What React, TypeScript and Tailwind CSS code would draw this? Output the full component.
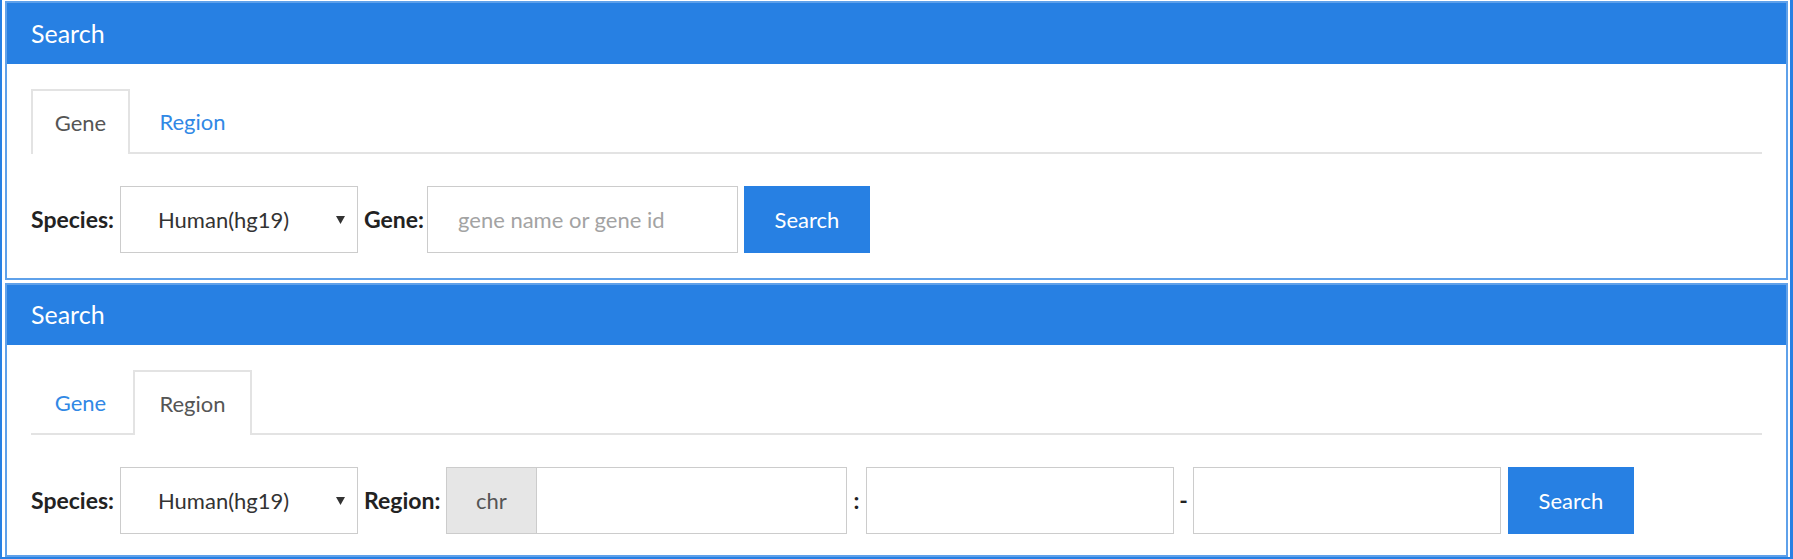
import React from "react";

const BLUE = "bg-[#2780e3]";

function Tabs({ active }: { active: "gene" | "region" }) {
  const tabs = [
    { key: "gene", label: "Gene", width: "w-[99px]" },
    { key: "region", label: "Region", width: "w-[119px]" },
  ];
  return (
    <div className="flex h-[65px] border-b-2 border-[#e3e3e3]">
      {tabs.map((t) => {
        const isActive = t.key === active;
        return (
          <div
            key={t.key}
            className={`${t.width} mr-[3px] -mb-[2px] h-[65px] flex items-center justify-center text-[22px] ${
              isActive
                ? "bg-white border-2 border-b-0 border-[#e3e3e3] text-[#555555]"
                : "text-[#3188e5]"
            }`}
          >
            {t.label}
          </div>
        );
      })}
    </div>
  );
}

function SpeciesSelect() {
  return (
    <>
      <div className="w-[89px] font-bold text-[23px] text-[#222222]">Species:</div>
      <div className="w-[238px] h-[67px] border border-[#cccccc] bg-white flex items-center">
        <span className="flex-1 pl-[37px] text-[22px] text-[#333333]">Human(hg19)</span>
        <svg width="9" height="8" viewBox="0 0 9 8" className="mr-[12px]">
          <path d="M0 0 L9 0 L4.5 8 Z" fill="#333333" />
        </svg>
      </div>
    </>
  );
}

function Panel({
  headerH,
  bottomPad,
  children,
}: {
  headerH: string;
  bottomPad: string;
  children: React.ReactNode;
}) {
  return (
    <section className="border-2 border-[#5fa1ea] bg-white">
      <div className={`${BLUE} ${headerH} flex items-center pl-[24px] text-white text-[25px]`}>
        Search
      </div>
      <div className={`pt-[25px] px-[24px] ${bottomPad}`}>{children}</div>
    </section>
  );
}

function SearchButton({ ml }: { ml: string }) {
  return (
    <button className={`${ml} w-[126px] h-[67px] ${BLUE} text-white text-[22px]`}>Search</button>
  );
}

export default function App() {
  return (
    <div className="w-[1793px] h-[559px] bg-white border-l-2 border-r-[3px] border-b-2 border-[#2780e3] pl-[3px] pr-[2px] pt-[1px] flex flex-col gap-[3px] font-['Lato',sans-serif] overflow-hidden">
      <Panel headerH="h-[61px]" bottomPad="pb-[25px]">
        <Tabs active="gene" />
        <div className="mt-[32px] h-[67px] flex items-center">
          <SpeciesSelect />
          <div className="ml-[6px] w-[63px] font-bold text-[23px] text-[#222222]">Gene:</div>
          <input
            className="w-[311px] h-[67px] border border-[#cccccc] pl-[30px] text-[22px] outline-none placeholder:text-[#a3a3a3]"
            placeholder="gene name or gene id"
          />
          <SearchButton ml="ml-[6px]" />
        </div>
      </Panel>

      <Panel headerH="h-[60px]" bottomPad="pb-[21px]">
        <Tabs active="region" />
        <div className="mt-[32px] h-[67px] flex items-center">
          <SpeciesSelect />
          <div className="ml-[6px] w-[82px] font-bold text-[23px] text-[#222222]">Region:</div>
          <div className="w-[91px] h-[67px] bg-[#e6e6e6] border border-[#cccccc] flex items-center justify-center text-[22px] text-[#555555]">
            chr
          </div>
          <input className="w-[310px] h-[67px] border border-l-0 border-[#cccccc] outline-none" />
          <div className="w-[19px] text-center font-bold text-[23px] text-[#222222]">:</div>
          <input className="w-[308px] h-[67px] border border-[#cccccc] outline-none" />
          <div className="w-[19px] text-center font-bold text-[23px] text-[#222222]">-</div>
          <input className="w-[308px] h-[67px] border border-[#cccccc] outline-none" />
          <SearchButton ml="ml-[7px]" />
        </div>
      </Panel>
    </div>
  );
}
